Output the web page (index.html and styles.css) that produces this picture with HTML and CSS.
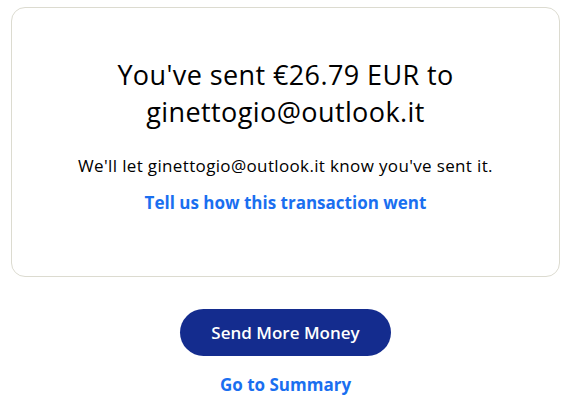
FILE: index.html
```html
<!DOCTYPE html>
<html lang="en">
<head>
<meta charset="utf-8">
<link rel="stylesheet" href="styles.css">
</head>
<body>
<main class="page">
  <section class="card">
    <h1 class="title">You've sent €26.79 EUR to ginettogio@outlook.it</h1>
    <p class="note">We'll let ginettogio@outlook.it know you've sent it.</p>
    <a class="link" href="#">Tell us how this transaction went</a>
  </section>
  <div class="actions">
    <button class="primary" type="button">Send More Money</button>
    <a class="link summary" href="#">Go to Summary</a>
  </div>
</main>
</body>
</html>
```
FILE: styles.css
```css
* { box-sizing: border-box; }
html, body { margin: 0; padding: 0; background: #fff; }
body {
  font-family: "Open Sans", Lato, "Liberation Sans", sans-serif;
  color: #000;
}
.page {
  padding: 7px 9px 0 11px;
}
.card {
  border: 1px solid #dcdbd0;
  border-radius: 14px;
  height: 270px;
  padding: 48px 40px 0;
  display: flex;
  flex-direction: column;
  align-items: center;
  text-align: center;
}
.title {
  margin: 0;
  font-size: 27px;
  line-height: 37px;
  font-weight: 400;
  letter-spacing: 0.4px;
  max-width: 400px;
}
.note {
  margin: 25px 0 0;
  font-size: 17px;
  line-height: 22px;
  letter-spacing: 0.35px;
}
.link {
  color: #1a6ff0;
  font-weight: 700;
  text-decoration: none;
  font-size: 17px;
  line-height: 22px;
}
.card .link { margin-top: 15px; }
.actions {
  display: flex;
  flex-direction: column;
  align-items: center;
  padding-top: 32px;
}
.primary {
  width: 211px;
  height: 47px;
  border: 0;
  border-radius: 24px;
  background: #142c8e;
  color: #fff;
  font-family: inherit;
  font-size: 17px;
  font-weight: 600;
  padding: 0;
}
.summary {
  margin-top: 18px;
}
```
